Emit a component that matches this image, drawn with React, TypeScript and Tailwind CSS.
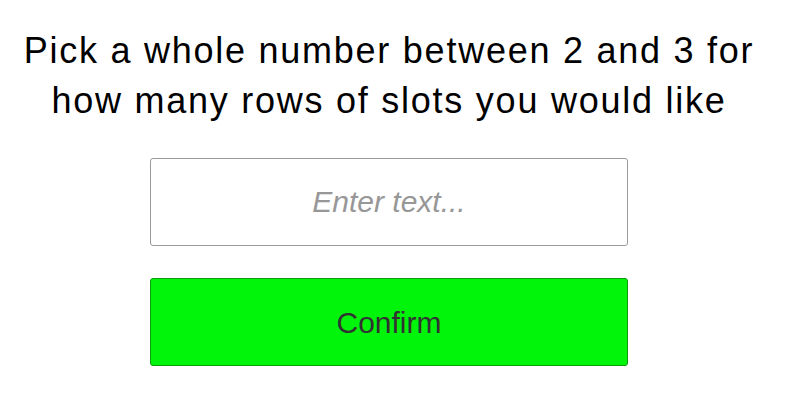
const App = () => {
  return (
    <div className="w-[778px] h-[415px] bg-white flex flex-col items-center font-['Liberation_Sans',Arial,sans-serif]">
      <h1 className="mt-[26px] text-[36px] leading-[50px] tracking-[1.75px] text-black text-center">
        Pick a whole number between 2 and 3 for
        <br />
        how many rows of slots you would like
      </h1>
      <input
        type="text"
        placeholder="Enter text..."
        className="mt-[32px] w-[478px] h-[88px] border border-[#9a9a9a] rounded-[3px] bg-white text-center text-[30px] text-[#323232] placeholder:italic placeholder:text-[#979797] outline-none"
      />
      <button className="mt-[32px] w-[478px] h-[88px] border border-[#0a9a0a] rounded-[3px] bg-[#00f50b] text-[30px] text-[#323232]">
        Confirm
      </button>
    </div>
  );
};

export default App;
